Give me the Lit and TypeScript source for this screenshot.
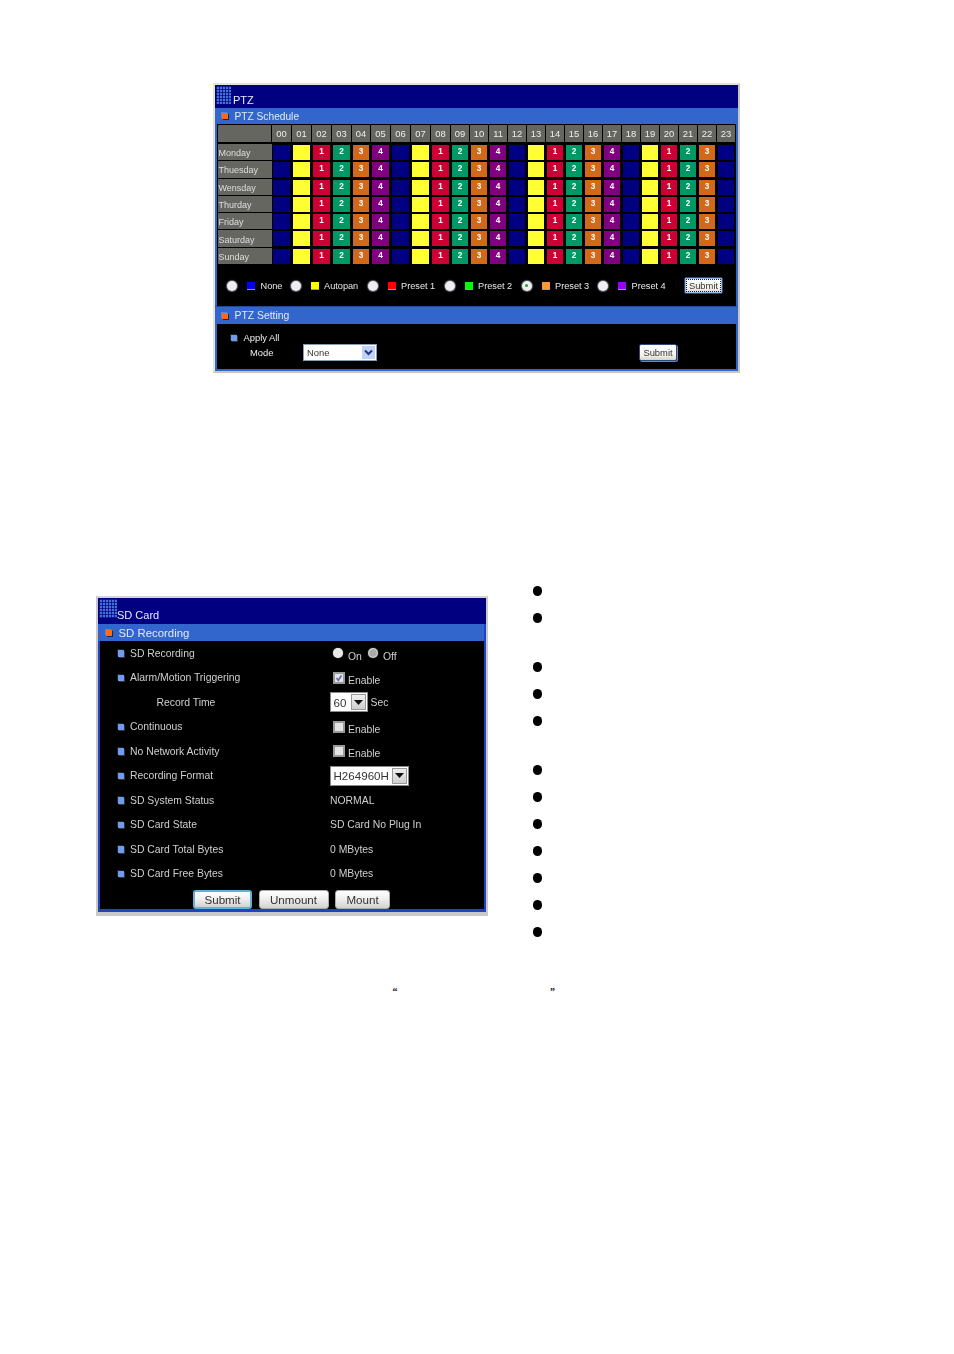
import { LitElement, html, css } from "lit";
import { customElement } from "lit/decorators.js";

const HOURS = Array.from({ length: 24 }, (_, i) => String(i).padStart(2, "0"));
const DAYS = ["Monday", "Thuesday", "Wensday", "Thurday", "Friday", "Saturday", "Sunday"];
const LEGEND = [
  ["None", "#0000ff"],
  ["Autopan", "#ffff00"],
  ["Preset 1", "#ff0000"],
  ["Preset 2", "#00ff00"],
  ["Preset 3", "#ff9933"],
  ["Preset 4", "#9900ff"],
];
const CELL = ["none", "auto", "p1", "p2", "p3", "p4"];
const CELL_TEXT = ["", "", "1", "2", "3", "4"];
const BULLETS = [false, true, false, false, true, false, false, false, false, false, false, false];

@customElement("app-root")
export class AppRoot extends LitElement {
  static styles = css`
    :host { display: block; width: 954px; height: 1354px; background: #fff; font-family: "Liberation Sans", Arial, sans-serif; overflow: hidden; }
    .page { display: flow-root; }
    .win { box-sizing: border-box; display: flex; flex-direction: column; filter: blur(0.35px); }

    .icon {
      background-color: #4472d4;
      background-image: linear-gradient(90deg, rgba(0,0,128,.75) 1px, transparent 1px), linear-gradient(rgba(0,0,128,.7) 1px, transparent 1px);
      background-size: 3px 3px;
    }
    .title { background: #000080; color: #e8e8ff; display: flex; align-items: flex-end; }
    .bar { background: #3366cc; color: #e4e8f6; display: flex; align-items: center; box-sizing: border-box; }
    .orange { background: #ff6a13; box-shadow: 1px 1px 0 #14245c, -1px -1px 0 #5c86dc; flex: none; }
    .blue-b { background: #6f9cf0; box-shadow: 1px 1px 0 #333, -1px -1px 0 #222; flex: none; }

    /* PTZ */
    .ptz { margin: 83px 0 0 213px; width: 527px; height: 290px; border: 2px solid #e6e3d8; border-right-color: #c9c6ba; border-bottom-color: #c9c6ba; background: #3366cc; }
    .ptz .title { height: 23px; font-size: 11px; padding-left: 1px; }
    .ptz .icon { width: 15px; height: 18px; margin-bottom: 4px; margin-right: 2px; }
    .ptz .title span { padding-bottom: 2px; }
    .bar.s1 { height: 16px; font-size: 10.2px; padding-left: 6.5px; width: 522px; }
    .orange.o1 { width: 6px; height: 6px; margin-right: 7px; }
    .sched { background: #000; margin-left: 2px; width: 519px; height: 182px; box-sizing: border-box; padding: 1px 0 0 .5px; display: flex; flex-direction: column; }
    .grid { display: grid; grid-template-columns: 54.5px repeat(4, 20px) 19px repeat(4, 20px) repeat(15, 19px); grid-template-rows: 17px 2px; grid-auto-rows: 17.3px; }
    .hd { background: #666660; color: #eee; font-size: 9.4px; display: flex; align-items: center; justify-content: center; margin-right: 1px; }
    .head-gap { grid-column: 1 / -1; }
    .day { background: #666660; color: #ddd; font-size: 9px; display: flex; align-items: center; padding: 2px 0 0 1px; margin: 0 .5px 1px 0; box-sizing: border-box; }
    .c { margin: 1px 2px 1.3px 1px; color: #fff; font-size: 8.2px; font-weight: bold; display: flex; align-items: center; justify-content: center; padding-bottom: 2px; box-sizing: border-box; }
    .none { background: #000080; }
    .auto { background: #ffff33; }
    .p1 { background: #cc0033; }
    .p2 { background: #009966; }
    .p3 { background: #d2691a; }
    .p4 { background: #800080; }
    .legend { flex: 1; display: grid; grid-template-columns: 63.5px 77px 77px 77px 76.5px 86px 39px; align-items: center; padding-left: 9.5px; color: #e8e8e8; font-size: 9.2px; }
    .li { display: flex; align-items: center; }
    .radio { width: 10px; height: 10px; border-radius: 50%; background: #eee; box-shadow: 0 0 1px 1px #667; flex: none; display: flex; align-items: center; justify-content: center; }
    .radio.sel::after { content: ""; width: 3px; height: 3px; border-radius: 50%; background: #2e9a3a; }
    .sw { width: 8px; height: 7px; margin: 0 5.5px 0 10px; border-bottom: 1px solid #99a; flex: none; }
    .btn { box-sizing: border-box; background: linear-gradient(#fff, #f3f2ea 70%, #d6d3c6); border: 1px solid #2c4a80; border-radius: 2px; color: #333; display: flex; align-items: center; justify-content: center; }
    .btn.small { font-size: 9.4px; height: 17px; }
    .btn.focus { box-shadow: inset 0 0 0 1px #9dbcf0; outline: 1px dotted #222; outline-offset: -3px; width: 39px; }
    .bar.s2 { height: 18px; font-size: 10.4px; padding-left: 6.5px; width: 522px; border-top: 1px solid #1f4a9a; }
    .setting { background: #000; margin-left: 2px; width: 519px; height: 45px; padding: 7px 0 0 14px; box-sizing: border-box; color: #eee; font-size: 9.4px; }
    .apply { display: flex; align-items: center; height: 13px; }
    .apply .blue-b { width: 6px; height: 6px; margin-right: 6.5px; }
    .mode { display: flex; align-items: center; height: 17px; padding-left: 19px; }
    .mode .lbl { width: 53px; }
    .xp { box-sizing: border-box; width: 74px; height: 17px; background: #fff; border: 1px solid #7f9db9; color: #333; display: flex; align-items: center; padding-left: 3px; font-size: 9.4px; }
    .xp .txt { flex: 1; }
    .xp .arr { width: 13px; height: 13px; margin-right: 1px; background: #c3d2f4; display: flex; align-items: center; justify-content: center; }
    .mode .btn { width: 38px; margin-left: 262px; box-shadow: 1px 1px 0 #6b86b0; }

    /* SD */
    .row { display: flex; margin: 212px 0 0 96px; align-items: flex-start; }
    .sd { margin-top: 11px; width: 392px; height: 320px; border: solid #c9c9c9; border-width: 2px 2px 4px 2px; background: #2242c4; border-top-color: #d4d4d4; }
    .sd .title { height: 26px; font-size: 11px; padding-left: 1px; }
    .sd .icon { width: 18px; height: 19px; margin-bottom: 6px; }
    .sd .title span { padding-bottom: 3px; }
    .bar.s3 { height: 17px; font-size: 11.4px; padding-left: 7.5px; width: 386px; }
    .orange.o3 { width: 6px; height: 6px; margin-right: 7px; }
    .body { background: #000; margin-left: 2px; width: 384px; height: 268px; color: #cfcfcf; font-size: 10.4px; box-sizing: border-box; }
    .rows { display: grid; grid-template-columns: 230px 1fr; grid-auto-rows: 24.5px; align-items: center; }
    .lab { display: flex; align-items: center; padding-left: 17.5px; }
    .lab .blue-b { width: 6.5px; height: 6.5px; margin-right: 6px; }
    .lab.sub { padding-left: 56.5px; }
    .val { display: flex; align-items: center; }
    .val .t3 { padding-top: 6px; }
    .val .t2 { padding-top: 5px; }
    .rd { width: 10px; height: 10px; border-radius: 50%; background: #e8e8e8; flex: none; margin-left: 3px; margin-right: 5px; box-shadow: 0 0 1px #ccc; }
    .rd.off { background: radial-gradient(#aaa 45%, #eee 75%); margin-left: 6px; }
    .cb { box-sizing: border-box; width: 12px; height: 12px; margin: 0 3px 0 3px; background: #e4e4e4; border: 2px solid #9a9a9a; flex: none; display: flex; align-items: center; justify-content: center; }
    .sel-b { box-sizing: border-box; height: 20px; background: #fff; border: 1px solid #8a8a8a; display: flex; align-items: center; color: #333; font-size: 11.6px; padding-left: 3px; }
    .sel-b.s60 { width: 38px; margin-left: -.5px; }
    .sel-b.h { width: 79px; margin-left: -.5px; }
    .sel-b .txt { flex: 1; }
    .sel-b .arr { width: 15px; height: 16px; margin-right: 1px; background: linear-gradient(#f0f0f0, #cfcfcf); border: 1px solid #999; box-sizing: border-box; display: flex; align-items: center; justify-content: center; }
    .sec { margin-left: 3px; }
    .btns { display: flex; gap: 6.5px; margin: 4px 0 0 93px; }
    .btns .btn { height: 19px; border: 1px solid #aaa; border-radius: 3px; background: linear-gradient(#fff, #f0f0f0 45%, #d2d2d2); font-size: 11.6px; color: #333; }
    .btns .btn.def { border: 2px solid #5fb3d8; }
    .b-submit { width: 59px; }
    .b-unmount { width: 70px; }
    .b-mount { width: 55px; }

    .bullets { list-style: none; margin: 1px 0 0 44.5px; padding: 0; }
    .bullets li { height: 27px; display: flex; align-items: flex-start; }
    .bullets li.wrap { height: 49px; }
    .bullets i { display: block; width: 9.5px; height: 9.5px; border-radius: 50%; background: #000; }
    .quotes { display: flex; margin: 32px 0 0 392.5px; font: bold 10px "Liberation Serif", serif; color: #111; }
    .quotes span:first-child { width: 157.5px; }
  `;

  private chevron() {
    return html`<svg width="9" height="7" viewBox="0 0 9 7"><path d="M1 1.5 4.5 5 8 1.5" fill="none" stroke="#1c3a8c" stroke-width="2"/></svg>`;
  }
  private tri() {
    return html`<svg width="9" height="5" viewBox="0 0 9 5"><path d="M0 0h9L4.5 5z" fill="#111"/></svg>`;
  }

  private schedule() {
    return html`<div class="grid">
      <div class="hd"></div>
      ${HOURS.map((h) => html`<div class="hd">${h}</div>`)}
      <div class="head-gap"></div>
      ${DAYS.map(
        (d) => html`<div class="day">${d}</div>
          ${HOURS.map((_, i) => {
            const k = i === 23 ? 0 : i % 6;
            return html`<div class="c ${CELL[k]}">${CELL_TEXT[k]}</div>`;
          })}`
      )}
    </div>`;
  }

  private sdRows() {
    const lab = (t: string) => html`<div class="lab"><span class="blue-b"></span>${t}</div>`;
    const enable = (on: boolean) => html`<div class="val">
      <span class="cb">${on
        ? html`<svg width="8" height="8" viewBox="0 0 8 8"><path d="M1.5 4 3.3 6.3 6.5 1.5" fill="none" stroke="#5a6fc0" stroke-width="1.6"/></svg>`
        : ""}</span><span class="t2">Enable</span>
    </div>`;
    return html`<div class="rows">
      ${lab("SD Recording")}
      <div class="val"><span class="rd"></span><span class="t3">On</span><span class="rd off"></span><span class="t3">Off</span></div>
      ${lab("Alarm/Motion Triggering")} ${enable(true)}
      <div class="lab sub">Record Time</div>
      <div class="val"><div class="sel-b s60"><span class="txt">60</span><span class="arr">${this.tri()}</span></div><span class="sec">Sec</span></div>
      ${lab("Continuous")} ${enable(false)}
      ${lab("No Network Activity")} ${enable(false)}
      ${lab("Recording Format")}
      <div class="val"><div class="sel-b h"><span class="txt">H264960H</span><span class="arr">${this.tri()}</span></div></div>
      ${lab("SD System Status")}<div class="val">NORMAL</div>
      ${lab("SD Card State")}<div class="val">SD Card No Plug In</div>
      ${lab("SD Card Total Bytes")}<div class="val">0 MBytes</div>
      ${lab("SD Card Free Bytes")}<div class="val">0 MBytes</div>
    </div>`;
  }

  render() {
    return html`<div class="page">
      <section class="win ptz">
        <div class="title"><div class="icon"></div><span>PTZ</span></div>
        <div class="bar s1"><span class="orange o1"></span>PTZ Schedule</div>
        <div class="sched">
          ${this.schedule()}
          <div class="legend">
            ${LEGEND.map(
              ([n, c], i) => html`<div class="li"><span class="radio ${i === 4 ? "sel" : ""}"></span><span class="sw" style="background:${c}"></span>${n}</div>`
            )}
            <div class="btn small focus">Submit</div>
          </div>
        </div>
        <div class="bar s2"><span class="orange o1"></span>PTZ Setting</div>
        <div class="setting">
          <div class="apply"><span class="blue-b"></span>Apply All</div>
          <div class="mode">
            <span class="lbl">Mode</span>
            <div class="xp"><span class="txt">None</span><span class="arr">${this.chevron()}</span></div>
            <div class="btn small">Submit</div>
          </div>
        </div>
      </section>

      <div class="row">
        <section class="win sd">
          <div class="title"><div class="icon"></div><span>SD Card</span></div>
          <div class="bar s3"><span class="orange o3"></span>SD Recording</div>
          <div class="body">
            ${this.sdRows()}
            <div class="btns">
              <div class="btn def b-submit">Submit</div>
              <div class="btn b-unmount">Unmount</div>
              <div class="btn b-mount">Mount</div>
            </div>
          </div>
        </section>
        <ul class="bullets">
          ${BULLETS.map((w) => html`<li class="${w ? "wrap" : ""}"><i></i></li>`)}
        </ul>
      </div>
      <div class="quotes"><span>“</span><span>”</span></div>
    </div>`;
  }
}
